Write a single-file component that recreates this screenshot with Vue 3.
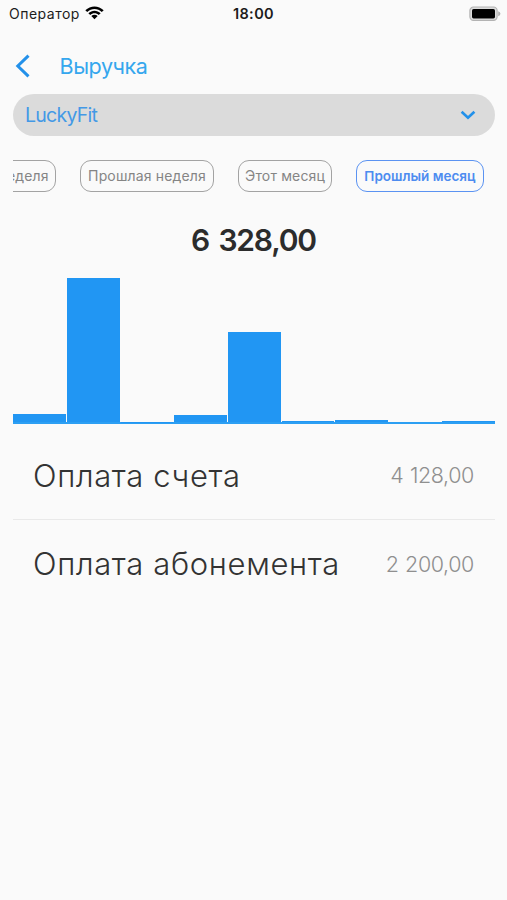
<script setup>
import { ref, computed } from 'vue'

// ── Datos ─────────────────────────────────────────────
const club = ref('LuckyFit')

const periods = [
  { id: 'this-week',  label: 'Эта неделя' },
  { id: 'last-week',  label: 'Прошлая неделя' },
  { id: 'this-month', label: 'Этот месяц' },
  { id: 'last-month', label: 'Прошлый месяц' },
]
const activePeriod = ref('last-month')

const bars = [8, 144, 0.4, 7, 90, 1, 2, 0, 1.4]

const rows = [
  { name: 'Оплата счета',      amount: 4128 },
  { name: 'Оплата абонемента', amount: 2200 },
]

const total = computed(() => rows.reduce((sum, r) => sum + r.amount, 0))

function money(n) {
  return n.toFixed(2).replace('.', ',').replace(/\B(?=(\d{3})+,)/g, ' ')
}
</script>

<template>
  <div class="screen">
    <div class="status">
      <div class="carrier">
        <span class="carrier-name">Оператор</span>
        <svg class="wifi" viewBox="0 0 18 14" width="19" height="14" preserveAspectRatio="none">
          <path d="M0.3 4.3 C5.2 -0.9 12.8 -0.9 17.7 4.3 L15.9 6.1 C12 2 6 2 2.1 6.1 Z" />
          <path d="M3.2 7.2 C6.4 3.8 11.6 3.8 14.8 7.2 L13 9 C10.8 6.6 7.2 6.6 5 9 Z" />
          <path d="M6 10 C7.7 8.4 10.3 8.4 12 10 L9 13.2 Z" />
        </svg>
      </div>
      <span class="clock">18:00</span>
      <svg class="battery" viewBox="0 0 32 16" width="32" height="16">
        <rect x="0.9" y="1" width="27.2" height="13.4" rx="3.6" fill="#dcdcdc" stroke="#b3b3b3" stroke-width="1.2" />
        <rect x="3" y="3" width="23" height="9.4" rx="1.6" fill="#000" />
        <path d="M29.2 5.2 Q31.4 6 31.4 7.7 Q31.4 9.4 29.2 10.2 Z" fill="#b0b0b0" />
      </svg>
    </div>

    <header class="header">
      <button class="back">
        <svg viewBox="0 0 16 24" width="16" height="24">
          <path d="M13.5 1.6 L2.8 12 L13.5 22.4" />
        </svg>
      </button>
      <h1 class="title">Выручка</h1>
    </header>

    <button class="select">
      <span class="select-label">{{ club }}</span>
      <svg viewBox="0 0 16 10" width="16" height="10">
        <path d="M1.6 1.7 L8 7.7 L14.4 1.7" />
      </svg>
    </button>

    <div class="periods">
      <button
        v-for="p in periods"
        :key="p.id"
        class="pill"
        :class="[p.id, { active: activePeriod === p.id }]"
        @click="activePeriod = p.id"
      >
        {{ p.label }}
      </button>
    </div>

    <div class="total">{{ money(total) }}</div>

    <div class="chart">
      <div v-for="(h, i) in bars" :key="i" class="bar" :style="{ height: h + 'px' }"></div>
    </div>

    <ul class="list">
      <li v-for="row in rows" :key="row.name" class="row">
        <span class="row-name">{{ row.name }}</span>
        <span class="row-amount">{{ money(row.amount) }}</span>
      </li>
    </ul>
  </div>
</template>

<style>
body {
  margin: 0;
  background: #fafafa;
}
</style>

<style scoped>
.screen {
  width: 507px;
  height: 900px;
  box-sizing: border-box;
  overflow: hidden;
  background: #fafafa;
  font-family: Inter, 'Liberation Sans', sans-serif;
  display: flex;
  flex-direction: column;
}

button {
  background: none;
  border: none;
  padding: 0;
  font-family: inherit;
  cursor: pointer;
}

/* ── Status ─── */
.status {
  height: 28px;
  flex-shrink: 0;
  display: grid;
  grid-template-columns: 1fr auto 1fr;
  align-items: center;
  padding: 0 6px 0 9px;
  box-sizing: border-box;
  color: #1c1c1c;
}
.carrier { display: flex; align-items: center; gap: 5px; }
.carrier-name { font-size: 14px; letter-spacing: 0.5px; margin-top: -1px; }
.wifi { fill: #000; margin-top: -2px; }
.clock { font-size: 14.5px; font-weight: 600; letter-spacing: 0.4px; margin: -1px 2px 0 -1px; }
.battery { justify-self: end; margin-top: -1px; }

/* ── Header ─── */
.header {
  height: 66px;
  flex-shrink: 0;
  display: flex;
  align-items: center;
  padding: 10px 0 0 15px;
  box-sizing: border-box;
}
.back { width: 16px; height: 24px; }
.back svg { display: block; }
.back path { fill: none; stroke: #2391ea; stroke-width: 3; }
.title {
  margin: 0 0 0 28.5px;
  font-size: 21.5px;
  font-weight: 400;
  letter-spacing: -0.4px;
  color: #35a7ee;
}

/* ── Select ─── */
.select {
  height: 41.5px;
  flex-shrink: 0;
  margin: 0 12.5px 0 13px;
  padding: 0 19px 0 12px;
  border-radius: 21px;
  background: #dbdbdb;
  display: flex;
  align-items: center;
  justify-content: space-between;
}
.select-label { font-size: 19.5px; letter-spacing: -0.75px; color: #4399e6; }
.select path { fill: none; stroke: #2391ea; stroke-width: 2.6; }

/* ── Periods ─── */
.periods {
  height: 32px;
  flex-shrink: 0;
  margin: 24px 12px 0 13px;
  padding-right: 11px;
  display: flex;
  justify-content: flex-end;
  gap: 24px;
  overflow: hidden;
}
.pill {
  flex-shrink: 0;
  height: 32px;
  box-sizing: border-box;
  border: 1.3px solid #a3a3a3;
  border-radius: 11px;
  font-size: 14px;
  letter-spacing: 0.15px;
  color: #858585;
  white-space: nowrap;
}
.pill.this-week  { width: 94px; }
.pill.last-week  { width: 134px; }
.pill.this-month { width: 94px; }
.pill.last-month { width: 128px; }
.pill.active { border-color: #5b93f2; color: #4d8cf0; font-weight: 600; font-size: 13.5px; letter-spacing: 0; }

/* ── Total ─── */
.total {
  margin-top: 28px;
  height: 40px;
  line-height: 40px;
  flex-shrink: 0;
  text-align: center;
  font-size: 30px;
  font-weight: 600;
  letter-spacing: -1.2px;
  word-spacing: 3px;
  color: #2c2c2c;
}

/* ── Chart ─── */
.chart {
  height: 164.5px;
  flex-shrink: 0;
  box-sizing: border-box;
  margin: 0 12px 0 13.4px;
  border-bottom: 2px solid #2c9ff3;
  display: flex;
  align-items: flex-end;
  gap: 1px;
}
.bar { flex: 1; background: #2196f3; }

/* ── List ─── */
.list {
  list-style: none;
  margin: 7px 12px 0 13px;
  padding: 0;
}
.row {
  height: 88px;
  box-sizing: border-box;
  display: flex;
  align-items: center;
  justify-content: space-between;
  padding: 0 21px 0 20px;
  white-space: nowrap;
}
.row + .row { border-top: 1px solid #e9e9e9; }
.row-name { font-size: 31px; font-weight: 300; letter-spacing: 0.65px; color: #333; }
.row-amount { font-size: 21.5px; font-weight: 300; letter-spacing: -0.4px; word-spacing: 1px; color: #8f8f8f; }
</style>
